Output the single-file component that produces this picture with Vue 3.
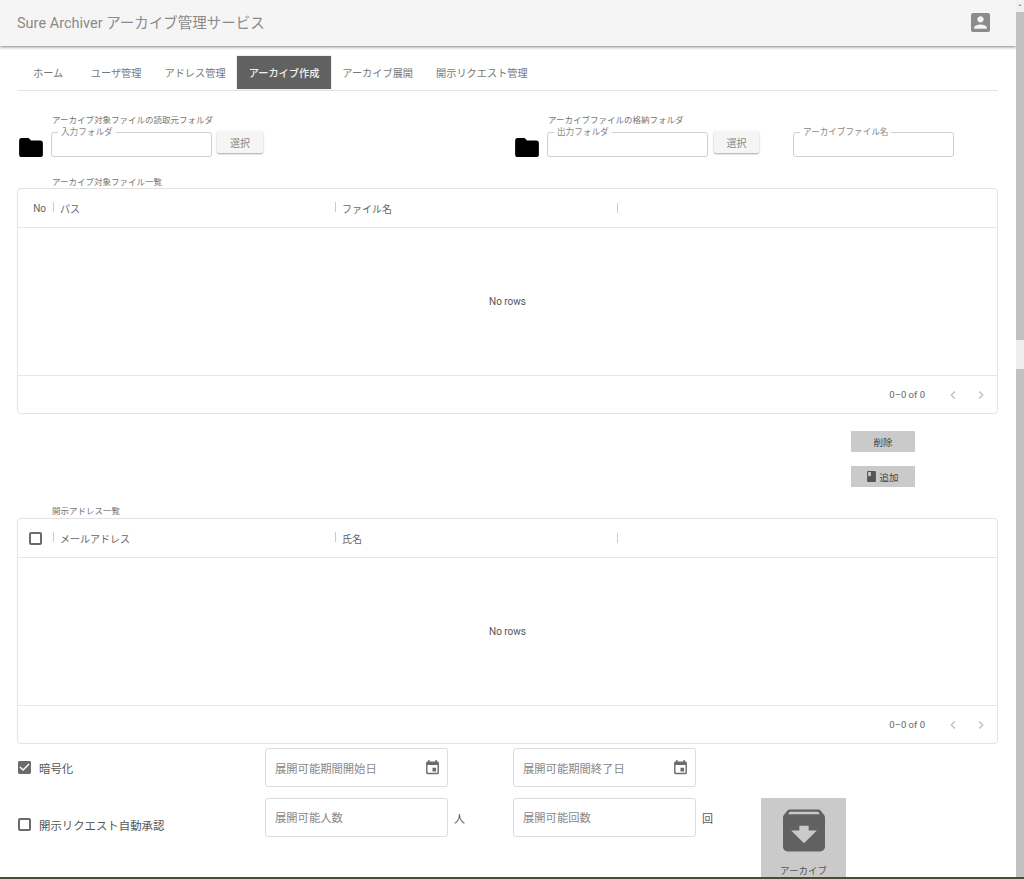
<template>
  <div class="screen">
    <div class="page">
      <header class="appbar">
        <h1 class="title">Sure Archiver アーカイブ管理サービス</h1>
        <svg class="account" viewBox="3 3 18 18"><path d="M3 5v14c0 1.1.89 2 2 2h14c1.1 0 2-.9 2-2V5c0-1.1-.9-2-2-2H5c-1.11 0-2 .9-2 2zm12 4c0 1.66-1.34 3-3 3s-3-1.34-3-3 1.34-3 3-3 3 1.34 3 3zm-9 8c0-2 4-3.1 6-3.1s6 1.1 6 3.1v1H6v-1z"/></svg>
      </header>

      <nav class="tabs">
        <span v-for="tab in tabs" :key="tab" class="tab" :class="{ active: tab === 'アーカイブ作成' }">{{ tab }}</span>
      </nav>

      <section class="folders">
        <div class="folder-block input-block">
          <p class="caption">アーカイブ対象ファイルの読取元フォルダ</p>
          <div class="folder-row">
            <svg class="folder" viewBox="2 4 20 16"><path d="M10 4H4c-1.1 0-2 .9-2 2v12c0 1.1.9 2 2 2h16c1.1 0 2-.9 2-2V8c0-1.1-.9-2-2-2h-8l-2-2z"/></svg>
            <fieldset class="outlined"><legend>入力フォルダ</legend></fieldset>
            <button class="select-btn">選択</button>
          </div>
        </div>
        <div class="folder-block output-block">
          <p class="caption">アーカイブファイルの格納フォルダ</p>
          <div class="folder-row">
            <svg class="folder" viewBox="2 4 20 16"><path d="M10 4H4c-1.1 0-2 .9-2 2v12c0 1.1.9 2 2 2h16c1.1 0 2-.9 2-2V8c0-1.1-.9-2-2-2h-8l-2-2z"/></svg>
            <fieldset class="outlined"><legend>出力フォルダ</legend></fieldset>
            <button class="select-btn">選択</button>
          </div>
        </div>
        <fieldset class="outlined name-w"><legend>アーカイブファイル名</legend></fieldset>
      </section>

      <p class="caption grid-caption files-caption">アーカイブ対象ファイル一覧</p>
      <div class="grid">
        <div class="grid-head">
          <span class="col-no">No</span>
          <span class="col col-path">パス</span>
          <span class="col col-file">ファイル名</span>
          <span class="col col-end"></span>
        </div>
        <div class="grid-body">No rows</div>
        <div class="grid-foot">
          <span>0–0 of 0</span>
          <svg class="chevron" viewBox="0 0 24 24"><path d="M15.41 7.41 14 6l-6 6 6 6 1.41-1.41L10.83 12z"/></svg>
          <svg class="chevron" viewBox="0 0 24 24"><path d="M10 6 8.59 7.41 13.17 12l-4.58 4.59L10 18l6-6z"/></svg>
        </div>
      </div>

      <div class="actions">
        <button class="grey-btn">削除</button>
        <button class="grey-btn">
          <svg class="book" viewBox="4 2 16 20"><path d="M18 2H6c-1.1 0-2 .9-2 2v16c0 1.1.9 2 2 2h12c1.1 0 2-.9 2-2V4c0-1.1-.9-2-2-2zM6 4h5v8l-2.5-1.5L6 12V4z"/></svg>
          追加
        </button>
      </div>

      <p class="caption grid-caption address-caption">開示アドレス一覧</p>
      <div class="grid">
        <div class="grid-head">
          <span class="col-check"><i class="checkbox"></i></span>
          <span class="col col-mail">メールアドレス</span>
          <span class="col col-file">氏名</span>
          <span class="col col-end"></span>
        </div>
        <div class="grid-body">No rows</div>
        <div class="grid-foot">
          <span>0–0 of 0</span>
          <svg class="chevron" viewBox="0 0 24 24"><path d="M15.41 7.41 14 6l-6 6 6 6 1.41-1.41L10.83 12z"/></svg>
          <svg class="chevron" viewBox="0 0 24 24"><path d="M10 6 8.59 7.41 13.17 12l-4.58 4.59L10 18l6-6z"/></svg>
        </div>
      </div>

      <section class="options">
        <div class="checks">
          <label class="check-line first">
            <svg class="tick" viewBox="3 3 18 18"><path d="M19 3H5c-1.11 0-2 .9-2 2v14c0 1.1.89 2 2 2h14c1.11 0 2-.9 2-2V5c0-1.1-.89-2-2-2zm-9 14-5-5 1.41-1.41L10 14.17l7.59-7.59L19 8l-9 9z"/></svg>
            暗号化
          </label>
          <label class="check-line">
            <i class="checkbox"></i>
            開示リクエスト自動承認
          </label>
        </div>
        <div class="field-grid">
          <div class="field">
            <span>展開可能期間開始日</span>
            <svg class="calendar" viewBox="3 1 18 21"><path d="M17 12h-5v5h5v-5zM16 1v2H8V1H6v2H5c-1.11 0-1.99.9-1.99 2L3 19c0 1.1.89 2 2 2h14c1.1 0 2-.9 2-2V5c0-1.1-.9-2-2-2h-1V1h-2zm3 18H5V8h14v11z"/></svg>
          </div>
          <div class="field">
            <span>展開可能期間終了日</span>
            <svg class="calendar" viewBox="3 1 18 21"><path d="M17 12h-5v5h5v-5zM16 1v2H8V1H6v2H5c-1.11 0-1.99.9-1.99 2L3 19c0 1.1.89 2 2 2h14c1.1 0 2-.9 2-2V5c0-1.1-.9-2-2-2h-1V1h-2zm3 18H5V8h14v11z"/></svg>
          </div>
          <div class="field-wrap">
            <div class="field"><span>展開可能人数</span></div>
            <em class="unit">人</em>
          </div>
          <div class="field-wrap">
            <div class="field"><span>展開可能回数</span></div>
            <em class="unit">回</em>
          </div>
        </div>
        <button class="archive-btn">
          <svg class="archive-icon" viewBox="3 3 18 18"><path d="M20.54 5.23l-1.39-1.68C18.88 3.21 18.47 3 18 3H6c-.47 0-.88.21-1.16.55L3.46 5.23C3.17 5.57 3 6.02 3 6.5V19c0 1.1.9 2 2 2h14c1.1 0 2-.9 2-2V6.5c0-.48-.17-.93-.46-1.27zM12 17.5 6.5 12H10v-2h4v2h3.5L12 17.5zM5.12 5l.81-1h12l.94 1H5.12z"/></svg>
          <span>アーカイブ</span>
        </button>
      </section>
    </div>
    <div class="scrollbar">
      <i class="arrow up"></i>
      <div class="thumb"></div>
      <div class="thumb-gap"></div>
      <div class="thumb rest"></div>
    </div>
    <div class="taskbar"></div>
  </div>
</template>

<script setup>
const tabs = ['ホーム', 'ユーザ管理', 'アドレス管理', 'アーカイブ作成', 'アーカイブ展開', '開示リクエスト管理']
</script>

<style>
html, body {
  margin: 0;
  overflow: hidden;
}
</style>

<style scoped>
.screen {
  position: relative;
  display: flex;
  width: 1024px;
  height: 879px;
  overflow: hidden;
  background: #fff;
  color: #666;
  font-family: Roboto, "Liberation Sans", "Noto Sans CJK JP", sans-serif;
}

.page {
  width: 1016px;
  flex: none;
}

.appbar {
  box-sizing: border-box;
  height: 46px;
  display: flex;
  align-items: center;
  justify-content: space-between;
  padding: 0 26px 4px 17px;
  background: #f5f5f5;
  box-shadow: 0 1px 3px rgba(0, 0, 0, 0.5);
}

.title {
  margin: 0;
  font-size: 14.5px;
  font-weight: 400;
  color: #8a8a8a;
}

.account {
  width: 19px;
  height: 19px;
  margin-top: 2px;
  fill: #8c8c8c;
}

.tabs {
  display: flex;
  margin: 10px 18px 0 17px;
  height: 34px;
  border-bottom: 1px solid #e4e4e4;
  padding-left: 4px;
}

.tab {
  display: flex;
  align-items: center;
  justify-content: center;
  height: 33px;
  padding: 0 11.5px;
  font-size: 10.2px;
  color: #777;
}

.tab:first-child {
  padding: 0 16px 0 12px;
}

.tab.active {
  background: #616161;
  color: #f2f2f2;
  font-weight: 500;
  box-shadow: 0 0 1px rgba(0, 0, 0, 0.4);
}

.folders {
  display: flex;
  align-items: flex-end;
  margin-top: 23px;
  padding-left: 19px;
}

.caption {
  margin: 0;
  font-size: 8.5px;
  line-height: 12px;
  color: #777;
}

.folder-block .caption {
  padding: 0 0 1px 33px;
}

.input-block {
  width: 496px;
}

.output-block {
  width: 278px;
}

.folder-row {
  display: flex;
  align-items: flex-start;
  height: 32px;
}

.folder {
  width: 24px;
  height: 19px;
  margin: 11px 8px 0 0;
  flex: none;
  fill: #000;
}

.outlined {
  box-sizing: border-box;
  width: 161px;
  height: 30px;
  margin: 0;
  padding: 0 0 0 6px;
  border: 1px solid #cfcfcf;
  border-radius: 3px;
  min-width: 0;
}

.outlined legend {
  padding: 0 3px;
  font-size: 8.6px;
  line-height: 10px;
  color: #888;
}

.name-w {
  margin-bottom: 2px;
}

.select-btn {
  box-sizing: border-box;
  width: 46px;
  height: 22px;
  margin: 4px 0 0 5px;
  border: 0;
  border-radius: 2px;
  background: #f5f5f5;
  box-shadow: 0 1px 2px rgba(0, 0, 0, 0.35);
  font: inherit;
  font-size: 10px;
  color: #888;
}

.output-block .select-btn {
  width: 45px;
  margin-left: 6px;
}

.grid-caption {
  padding-left: 52px;
}

.files-caption {
  margin-top: 17px;
}

.address-caption {
  margin-top: 18px;
}

.grid {
  box-sizing: border-box;
  width: 981px;
  margin: 1px 0 0 17px;
  height: 226px;
  display: flex;
  flex-direction: column;
  border: 1px solid #e3e3e3;
  border-radius: 4px;
  font-size: 10px;
  color: #555;
}

.files-caption + .grid {
  margin-top: 0;
}

.grid-head {
  flex: none;
  height: 38px;
  display: flex;
  align-items: center;
  border-bottom: 1px solid #e6e6e6;
  color: #666;
}

.col-no {
  box-sizing: border-box;
  width: 35px;
  text-align: right;
  padding-right: 7px;
}

.col-check {
  width: 35px;
  display: flex;
  padding-left: 11px;
  box-sizing: border-box;
}

.col {
  position: relative;
  box-sizing: border-box;
  padding-left: 7px;
}

.col::before {
  content: "";
  position: absolute;
  left: 0;
  top: 1px;
  width: 1px;
  height: 10px;
  background: #ccc;
}

.col-path,
.col-mail {
  width: 282px;
}

.col-file {
  width: 282px;
}

.col-end {
  height: 12px;
}

.grid-body {
  flex: 1;
  display: flex;
  align-items: center;
  justify-content: center;
  border-bottom: 1px solid #e6e6e6;
  color: #555;
}

.grid-foot {
  flex: none;
  height: 37px;
  display: flex;
  align-items: center;
  justify-content: flex-end;
  padding-right: 8px;
  color: #666;
}

.chevron {
  width: 16px;
  height: 16px;
  margin-left: 12px;
  fill: #bdbdbd;
}

.grid-foot span {
  margin-right: 8px;
  font-size: 9.5px;
}

.actions {
  display: flex;
  flex-direction: column;
  align-items: flex-end;
  gap: 14px;
  margin-top: 17px;
  padding-right: 101px;
}

.grey-btn {
  display: flex;
  align-items: center;
  justify-content: center;
  gap: 3px;
  width: 64px;
  height: 21px;
  padding: 0;
  border: 0;
  background: #cacaca;
  font: inherit;
  font-size: 9.5px;
  color: #444;
}

.book {
  width: 9px;
  height: 11px;
  fill: #555;
}

.checkbox {
  display: block;
  box-sizing: border-box;
  width: 13px;
  height: 13px;
  border: 2px solid #6b6b6b;
  border-radius: 2px;
  flex: none;
}

.options {
  position: relative;
  display: flex;
  margin-top: 4px;
  padding-left: 18px;
}

.checks {
  width: 247px;
  font-size: 11.4px;
  color: #555;
}

.check-line {
  display: flex;
  align-items: center;
  gap: 8px;
  height: 13px;
}

.check-line.first {
  margin: 13px 0 44px;
}

.tick {
  width: 13px;
  height: 13px;
  fill: #6b6b6b;
}

.field-grid {
  display: grid;
  grid-template-columns: 183px 183px;
  column-gap: 65px;
  row-gap: 11px;
  align-content: start;
}

.field {
  box-sizing: border-box;
  width: 183px;
  height: 39px;
  display: flex;
  align-items: center;
  justify-content: space-between;
  padding: 0 8px 0 9px;
  border: 1px solid #dcdcdc;
  border-radius: 3px;
  font-size: 11.3px;
  color: #888;
}

.field-wrap {
  position: relative;
}

.field-wrap .field {
  padding-bottom: 2px;
}

.unit {
  position: absolute;
  left: 189px;
  top: 12px;
  font-style: normal;
  font-size: 11px;
  color: #555;
}

.calendar {
  width: 13px;
  height: 15px;
  fill: #6b6b6b;
}

.archive-btn {
  position: absolute;
  left: 761px;
  top: 50px;
  width: 85px;
  height: 90px;
  padding: 11px 0 0;
  border: 0;
  background: #cacaca;
  display: flex;
  flex-direction: column;
  align-items: center;
  gap: 13px;
  font: inherit;
  font-size: 9.5px;
  line-height: 12px;
  color: #555;
}

.archive-icon {
  width: 42px;
  height: 43px;
  fill: #616161;
}

.scrollbar {
  display: flex;
  flex-direction: column;
  width: 8px;
  flex: none;
  background: #f1f1f1;
}

.arrow {
  display: block;
  height: 12px;
}

.arrow.up::before {
  content: "";
  display: block;
  width: 0;
  margin: 4px auto 0;
  border: 2px solid transparent;
  border-bottom-color: #a3a3a3;
  border-top: 0;
}

.thumb {
  height: 328px;
  background: #c1c1c1;
}

.thumb-gap {
  height: 29px;
  background: #eee;
}

.thumb.rest {
  flex: 1;
}

.taskbar {
  position: absolute;
  left: 0;
  right: 0;
  bottom: 0;
  height: 2px;
  background: #4d4a30;
}
</style>
